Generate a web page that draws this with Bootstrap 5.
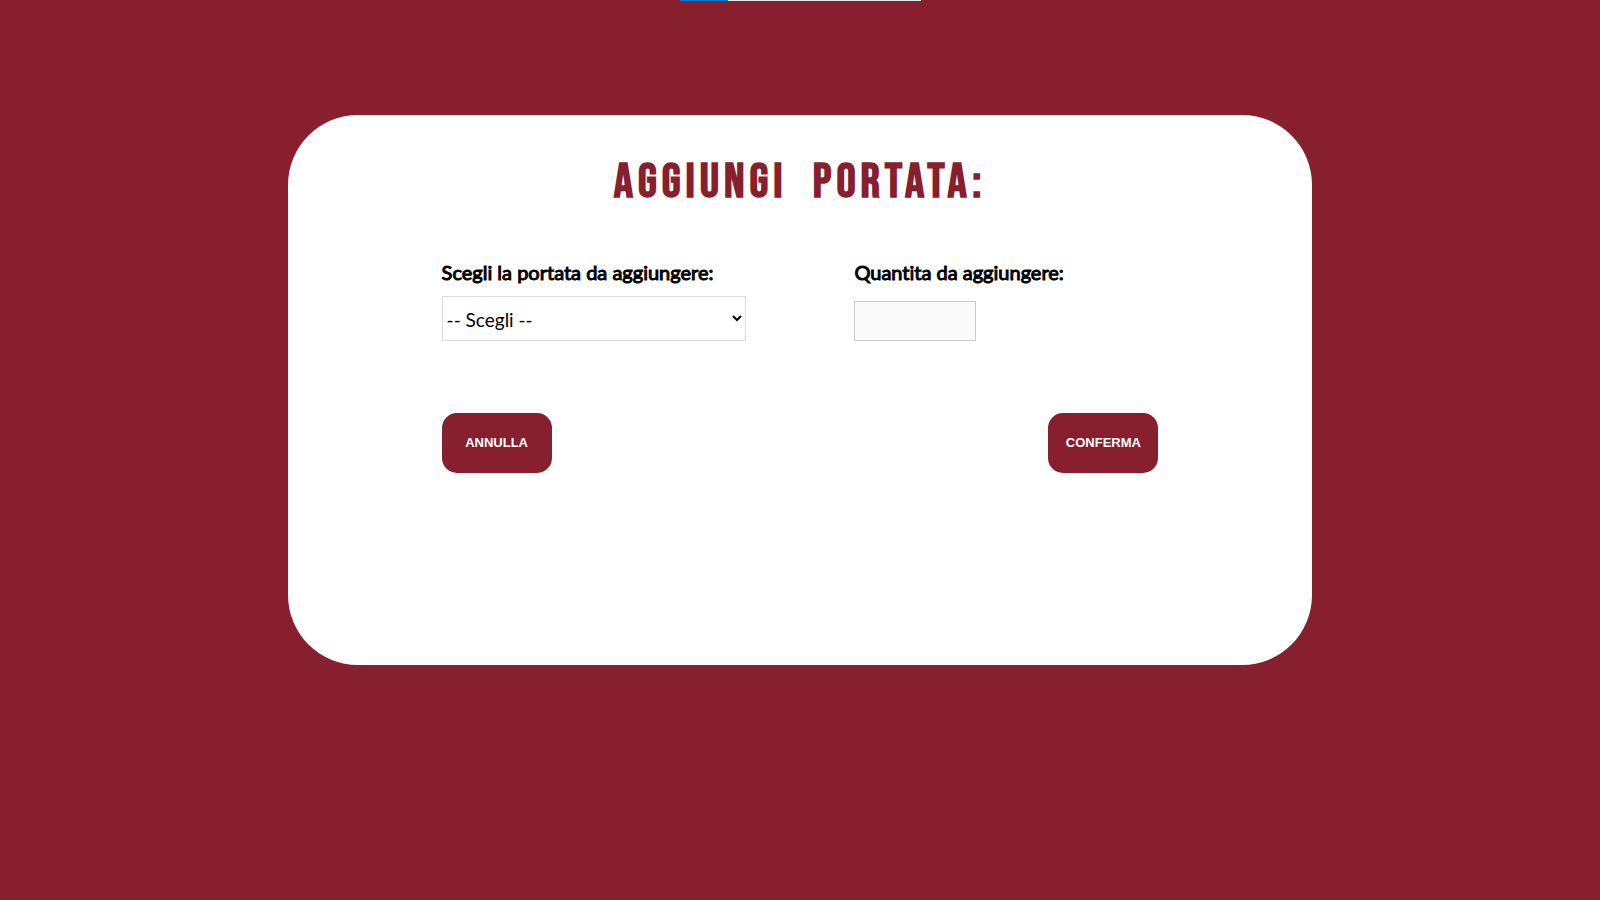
<!DOCTYPE html>
<html lang="it">
<head>
<meta charset="utf-8">
<meta name="viewport" content="width=device-width, initial-scale=1">
<title>Aggiungi portata</title>
<link href="https://cdn.jsdelivr.net/npm/bootstrap@5.3.0/dist/css/bootstrap.min.css" rel="stylesheet">
<style>
  body { background: #871f2f; color: #000; font-family: Lato, sans-serif; }
  .top-strip { width: 241px; height: 1px; background: #e6e6e6; }
  .top-strip span { width: 48px; background: #0078d4; }
  .panel { width: 64%; min-height: 550px; margin-top: 114px; padding-top: 42px; border-radius: 70px; }
  .panel-title { color: #871f2f; font-family: "Bebas Neue", "Liberation Sans Narrow", sans-serif; font-size: 48px; font-weight: 700; line-height: 52px; letter-spacing: 5px; }
  .panel-form { width: 70%; margin-top: 49px; }
  .field { width: 304px; max-width: 100%; }
  .field-label { font-size: 20px; font-weight: 400; line-height: 28px; font-variant-ligatures: none; -webkit-text-stroke: 1px #000; }
  .dish-select { height: 45px; margin-top: 10px; border: 1px solid #ddd; background: #fff; color: #000; font-size: 19px; padding: 2px 0 0; }
  .qty-input { width: 122px; height: 40px; border: 1px solid #ccc; background: #fafafa; font-size: 19px; }
  .actions { margin-top: 72px; }
  .btn-wine { width: 110px; height: 60px; padding: 0; border: 0; border-radius: 15px; font: 700 13px/20px "Liberation Sans", sans-serif; }
  .btn-wine, .btn-wine:hover { background: #871f2f; color: #fff; }
</style>
</head>
<body>
<div class="top-strip d-flex mx-auto"><span></span></div>
<main class="panel bg-white mx-auto">
  <h1 class="panel-title text-center text-uppercase mb-0">Aggiungi&nbsp; portata:</h1>
  <form class="panel-form mx-auto">
    <div class="d-flex flex-wrap justify-content-between">
      <div class="field d-flex flex-column justify-content-between">
        <label class="field-label" for="portata">Scegli la portata da aggiungere:</label>
        <select class="dish-select w-100" id="portata"><option>-- Scegli --</option></select>
      </div>
      <div class="field d-flex flex-column justify-content-between">
        <label class="field-label" for="quantita">Quantita da aggiungere:</label>
        <input class="qty-input" id="quantita" type="number">
      </div>
    </div>
    <div class="actions d-flex justify-content-between">
      <button class="btn btn-wine" type="button">ANNULLA</button>
      <button class="btn btn-wine" type="submit">CONFERMA</button>
    </div>
  </form>
</main>
<script src="https://cdn.jsdelivr.net/npm/bootstrap@5.3.0/dist/js/bootstrap.bundle.min.js"></script>
</body>
</html>
